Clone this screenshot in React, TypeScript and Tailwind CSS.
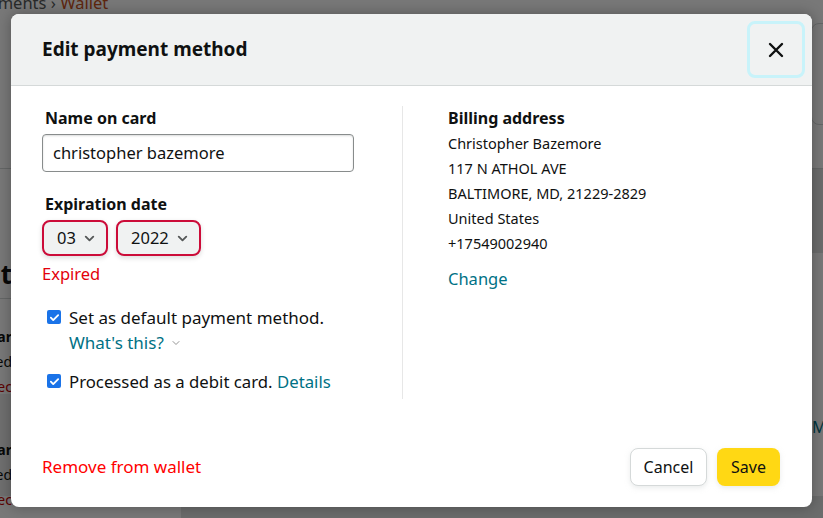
import { ChevronDown } from 'lucide-react'

function Check({ children }: { children: React.ReactNode }) {
  return (
    <div className="flex items-start gap-[8px]">
      <span className="mt-[5px] ml-[5px] w-[14px] h-[14px] shrink-0 rounded-[2px] bg-[#1a73e8] flex items-center justify-center">
        <svg width="11" height="11" viewBox="0 0 12 12" fill="none">
          <path d="M2 6.2l2.6 2.6L10 3.4" stroke="white" strokeWidth="2" strokeLinecap="round" strokeLinejoin="round" />
        </svg>
      </span>
      <div>{children}</div>
    </div>
  )
}

function Select({ value, width }: { value: string; width: string }) {
  return (
    <div className={`${width} h-[36px] rounded-[8px] border-2 border-[#cc0c39] bg-[#f0f2f2] shadow-[0_2px_5px_rgba(15,17,17,0.15)] flex items-center justify-between pl-[13px] pr-[9px] text-[16.5px] text-[#0f1111]`}>
      <span>{value}</span>
      <ChevronDown size={15} strokeWidth={3} className="text-[#565959]" />
    </div>
  )
}

// text fragments of the page behind, right-aligned so only their tail shows at the left edge
function Tail({ children, className }: { children: React.ReactNode; className?: string }) {
  return <div className={`w-[12px] flex justify-end whitespace-nowrap ${className ?? ''}`}>{children}</div>
}

export default function App() {
  const address = ['Christopher Bazemore', '117 N ATHOL AVE', 'BALTIMORE, MD, 21229-2829', 'United States', '+17549002940']

  return (
    <div className="relative w-[823px] h-[518px] overflow-hidden bg-white font-['Noto_Sans',sans-serif] text-[#0f1111]">
      {/* page behind the dialog */}
      <div className="flex flex-col w-full h-full">
        <div className="h-[24px] -mt-[9px] -ml-[30px] text-[16.5px] text-[#565959] whitespace-nowrap">
          Payments › <span className="text-[#c7511f]">Wallet</span>
        </div>
        <div className="flex justify-end h-[154px] pt-[8px] border-b border-[#d5d9d9]">
          <div className="w-[200px] h-[102px] -mr-[188px] rounded-[8px] border border-[#d5d9d9]" />
        </div>
        <div className="flex flex-1">
          <div className="w-[181px] shrink-0 flex flex-col">
            <div className="h-[129px] flex items-end pb-[5px] text-[26px] leading-[38px] font-bold">
              <Tail>Payment</Tail>
            </div>
            <div className="h-[96px] border-t border-[#d5d9d9] pt-[25px] text-[14px] leading-[25px]">
              <Tail className="font-bold">Mastercar</Tail>
              <Tail>Ended</Tail>
              <Tail className="text-[#c40000]">Update sec</Tail>
            </div>
            <div className="h-[102px] bg-[#ececec] pt-[43px] text-[14px] leading-[25px]">
              <Tail className="font-bold">Visa car</Tail>
              <Tail>Ended</Tail>
              <Tail className="text-[#c40000]">Update sec</Tail>
            </div>
          </div>
          <div className="flex-1 flex flex-col">
            <div className="h-[84px] bg-[#e3e6e6]" />
            <div className="flex-1 pt-[162px] pl-[631px] text-[16px] text-[#007185] whitespace-nowrap">More</div>
            <div className="h-[22px] bg-[#e3e6e6]" />
          </div>
        </div>
      </div>
      <div className="absolute inset-0 bg-[rgba(0,0,0,0.53)]" />

      {/* dialog */}
      <div className="absolute left-[11px] top-[14px] w-[801px] h-[493px] bg-white rounded-[8px] shadow-[0_0_14px_rgba(0,0,0,0.3)] overflow-hidden flex flex-col">
        <div className="h-[72px] shrink-0 bg-[#f0f2f2] border-b border-[#d5d9d9] flex items-center justify-between pl-[31px] pr-[7px]">
          <h2 className="text-[19px] font-bold">Edit payment method</h2>
          <button className="w-[58px] h-[57px] rounded-[8px] border-[3px] border-[#c8f3fa] flex items-center justify-center">
            <svg width="16" height="16" viewBox="0 0 16 16" fill="none">
              <path d="M2 2l12 12M14 2L2 14" stroke="#0f1111" strokeWidth="2.4" strokeLinecap="round" />
            </svg>
          </button>
        </div>

        <div className="flex-1 flex pt-[20px] pl-[31px]">
          <div className="w-[360px] h-[293px] flex flex-col">
            <label className="pl-[3px] text-[16px] leading-[24px] font-bold">Name on card</label>
            <div className="mt-[4px] w-[312px] h-[38px] rounded-[4px] border border-[#888c8c] shadow-[inset_0_1px_2px_rgba(15,17,17,0.15)] flex items-center pl-[10px] text-[16.5px]">
              christopher bazemore
            </div>
            <label className="mt-[20px] pl-[3px] text-[16px] leading-[24px] font-bold">Expiration date</label>
            <div className="mt-[4px] flex gap-[8px]">
              <Select value="03" width="w-[66px]" />
              <Select value="2022" width="w-[85px]" />
            </div>
            <div className="mt-[6px] text-[16.5px] leading-[24px] text-[#e3000b]">Expired</div>
            <div className="mt-[19px] text-[17px] leading-[25px]">
              <Check>
                <div>Set as default payment method.</div>
                <div className="flex items-center gap-[6px] text-[#007185]">
                  What's this?
                  <ChevronDown size={12} strokeWidth={2} className="text-[#949494]" />
                </div>
              </Check>
            </div>
            <div className="mt-[14px] text-[16.75px] leading-[25px]">
              <Check>
                Processed as a debit card. <span className="text-[#007185]">Details</span>
              </Check>
            </div>
          </div>

          <div className="w-px h-[293px] bg-[#e7e7e7]" />

          <div className="pl-[45px] flex flex-col">
            <div className="text-[16px] leading-[24px] font-bold">Billing address</div>
            <div className="pt-[1px] text-[14.5px] leading-[25px]">
              {address.map(line => (
                <div key={line}>{line}</div>
              ))}
            </div>
            <div className="mt-[11px] text-[16.5px] leading-[24px] text-[#007185]">Change</div>
          </div>
        </div>

        <div className="h-[59px] shrink-0 flex items-start justify-between pl-[31px] pr-[32px]">
          <div className="mt-[7px] text-[17px] leading-[24px] text-[#f00]">Remove from wallet</div>
          <div className="flex gap-[10px]">
            <button className="w-[77px] h-[38px] rounded-[8px] border border-[#d5d9d9] bg-white shadow-[0_2px_5px_rgba(213,217,217,0.5)] text-[16px]">Cancel</button>
            <button className="w-[63px] h-[38px] rounded-[8px] bg-[#ffd814] shadow-[0_2px_5px_rgba(213,217,217,0.5)] text-[16px]">Save</button>
          </div>
        </div>
      </div>
    </div>
  )
}
